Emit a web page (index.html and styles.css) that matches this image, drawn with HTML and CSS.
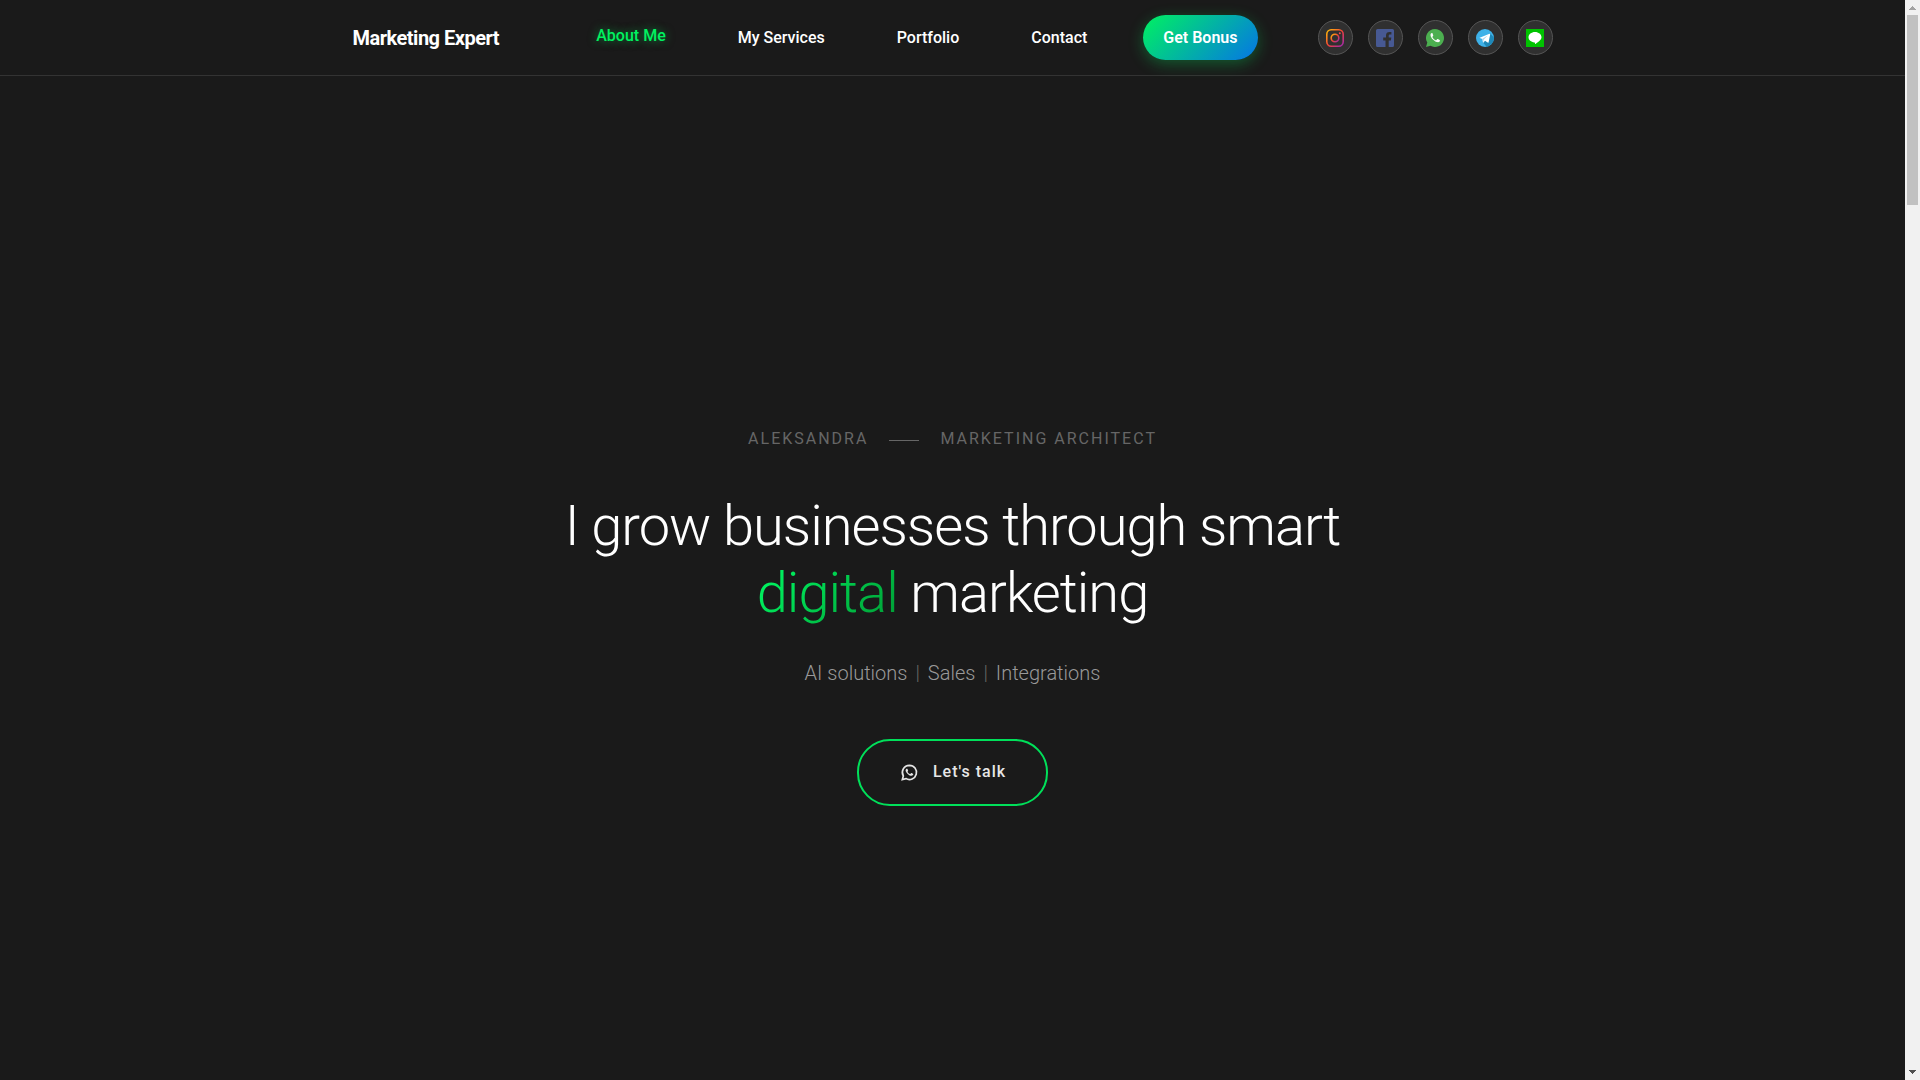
FILE: index.html
```html
<!DOCTYPE html>
<html lang="en">
<head>
  <meta charset="utf-8">
  <meta name="viewport" content="width=device-width, initial-scale=1">
  <title>Marketing Expert</title>
  <link rel="stylesheet" href="styles.css">
</head>
<body>
  <div class="shell">
    <div class="page">
      <header class="header">
        <div class="container">
          <a class="logo" href="#">Marketing Expert</a>
          <nav class="nav" aria-label="Main">
            <a class="nav-link active" href="#about">About Me</a>
            <a class="nav-link" href="#services">My Services</a>
            <a class="nav-link" href="#portfolio">Portfolio</a>
            <a class="nav-link" href="#contact">Contact</a>
            <button class="bonus" type="button">Get Bonus</button>
          </nav>
          <div class="social">
            <a href="#instagram" aria-label="Instagram">
              <svg viewBox="0 0 18 18">
                <defs>
                  <linearGradient id="ig" x1="0" y1="0" x2="1" y2="1">
                    <stop offset="0" stop-color="#ffc107"/>
                    <stop offset=".5" stop-color="#f44336"/>
                    <stop offset="1" stop-color="#9c27b0"/>
                  </linearGradient>
                </defs>
                <g fill="none" stroke="url(#ig)">
                  <rect x=".8" y=".8" width="16.4" height="16.4" rx="4.4" stroke-width="1.6"/>
                  <circle cx="9" cy="9" r="3.8" stroke-width="1.6"/>
                </g>
                <circle cx="13.8" cy="4.2" r="1" fill="#f2475a"/>
              </svg>
            </a>
            <a href="#facebook" aria-label="Facebook">
              <svg viewBox="0 0 18 18">
                <path fill="#475993" d="M1.500 0h15A1.500 1.500 0 0 1 18 1.500v15a1.500 1.500 0 0 1-1.500 1.500h-3.800v-6.600h2.200l.4-2.800h-2.600V6.900c0-.9.400-1.400 1.400-1.400h1.300V3.100c-.6-.1-1.200-.1-1.900-.1-2.200 0-3.500 1.200-3.500 3.400v2.200H7.200v2.800h2.300V18h-8A1.500 1.500 0 0 1 0 16.500v-15A1.500 1.500 0 0 1 1.500 0z"/>
              </svg>
            </a>
            <a href="#whatsapp" aria-label="WhatsApp">
              <svg viewBox="0 0 18 18">
                <path fill="#4caf50" d="M9 0a9 9 0 1 1-4.500 16.800L0 18l1.300-4.400A9 9 0 0 1 9 0z"/>
                <path fill="#fafafa" d="M6.600 4.400c-.2-.4-.4-.5-.8-.5-.5 0-1.300.7-1.300 2 0 1.500 1 3.200 2.700 4.900 1.700 1.700 3.400 2.500 4.900 2.500 1.200 0 1.900-.9 1.900-1.700 0-.4-.1-.5-.4-.7l-1.700-.9c-.4-.2-.6-.1-.8.200l-.7.900c-.2.200-.4.200-.7.100-1.400-.6-2.500-1.700-3.200-3-.1-.2-.1-.4.100-.6l.5-.7c.2-.2.200-.4.100-.6z"/>
              </svg>
            </a>
            <a href="#telegram" aria-label="Telegram">
              <svg viewBox="0 0 18 18">
                <circle cx="9" cy="9" r="9" fill="#3eb1e8"/>
                <path fill="#1e88b8" d="M14 4.300l3.900 4.300a9 9 0 0 1-7.300 9.200L7.200 13.700z"/>
                <path fill="#fff" d="M3.700 8.700l9.800-4c.5-.2.900.1.700.9l-1.600 7.600c-.1.600-.5.700-1 .4L9 11.700l-1.500 1.900c-.3.200-.6 0-.6-.4l-.5-3.300-2.600-.8c-.4-.1-.4-.3-.1-.4z"/>
                <path fill="#b3d9ee" d="M7.200 13.400l-.8-3.600 5.300-3.200-4 4.200z"/>
              </svg>
            </a>
            <a href="#line" aria-label="LINE">
              <svg viewBox="0 0 18 18">
                <path fill="#00c300" d="M0 0h18v18H0z"/>
                <path fill="#fff" d="M9 3c3.600 0 6.500 2.300 6.500 5.200 0 2.800-3.600 4.800-6 6.800-.5.300-.6 0-.5-.5 0-.6 0-1-.6-1.100C5 13 2.500 11 2.500 8.200 2.500 5.300 5.400 3 9 3z"/>
              </svg>
            </a>
          </div>
        </div>
      </header>

      <main class="hero">
        <p class="eyebrow"><span>ALEKSANDRA</span><span class="rule"></span><span>MARKETING ARCHITECT</span></p>
        <h1 class="title">I grow businesses through smart <span class="accent">digital</span> marketing</h1>
        <p class="skills"><span>AI solutions</span><span class="bar">|</span><span>Sales</span><span class="bar">|</span><span>Integrations</span></p>
        <button class="talk" type="button">
          <svg viewBox="0 0 24 24">
            <path fill="none" stroke="#e6e6e6" stroke-width="2" d="M12.500 4a8.500 8.500 0 1 1-4.200 15.900L4 21l1.200-4.200A8.500 8.500 0 0 1 12.500 4z"/>
            <path fill="#e6e6e6" d="M10.200 8.400c-.2-.4-.4-.4-.8-.4-.6 0-1.500.8-1.500 2 0 1.500 1 2.900 2.500 4.300 1.600 1.500 3.200 2.200 4.600 2.200 1.200 0 2.100-.9 2.100-1.800 0-.4-.1-.5-.4-.6l-1.700-.8c-.3-.1-.5-.1-.7.200l-.7.800c-.2.200-.3.200-.6.100-1.200-.5-2.100-1.400-2.700-2.400-.1-.3-.1-.4.100-.6l.5-.7c.1-.2.100-.3 0-.5z"/>
          </svg>
          <span>Let's talk</span>
        </button>
      </main>
    </div>

    <div class="scrollbar" aria-hidden="true">
      <svg class="arrow" viewBox="0 0 7 4"><path fill="#a3a3a3" d="M3 0h1v1h1v1h1v1h1v1H0V3h1V2h1V1h1z"/></svg>
      <div class="thumb"></div>
      <svg class="arrow" viewBox="0 0 7 4"><path fill="#505050" d="M0 0h7v1H6v1H5v1H4v1H3V3H2V2H1V1H0z"/></svg>
    </div>
  </div>
</body>
</html>
```

FILE: styles.css
```css
* {
  box-sizing: border-box;
}

body {
  margin: 0;
  background: #1a1a1a;
  color: #fff;
  font-family: Roboto, "Liberation Sans", sans-serif;
  font-size: 16px;
  line-height: 24px;
}

a {
  color: inherit;
  text-decoration: none;
}

button {
  font: inherit;
  color: inherit;
  cursor: pointer;
}

.shell {
  display: grid;
  grid-template-columns: 1fr 15px;
  height: 100vh;
  overflow: hidden;
}

.page {
  min-width: 0;
  overflow: hidden;
}

/* Header */
.header {
  border-bottom: 1px solid #333;
}

.container {
  display: flex;
  align-items: center;
  max-width: 1200px;
  margin: 0 auto;
  padding: 15px 0;
}

.logo {
  font-size: 20px;
  font-weight: 700;
  letter-spacing: -0.5px;
  white-space: nowrap;
}

.nav {
  display: flex;
  align-items: center;
  gap: 40px;
  margin-left: auto;
}

.nav-link {
  padding: 0 16px;
  font-weight: 500;
  white-space: nowrap;
}

.nav-link.active {
  padding-bottom: 4px;
  color: #00f260;
  text-shadow: 0 0 10px rgba(0, 242, 96, 0.5);
}

.bonus {
  height: 45px;
  padding: 0 20px;
  border: 0;
  border-radius: 25px;
  background: linear-gradient(135deg, #00f260, #0575e6);
  box-shadow: 0 4px 15px rgba(0, 242, 96, 0.3);
  font-weight: 600;
  white-space: nowrap;
}

.social {
  display: flex;
  gap: 15px;
  margin-left: 60px;
}

.social a {
  display: grid;
  place-items: center;
  width: 35px;
  height: 35px;
  border: 1px solid #555;
  border-radius: 50%;
  background: #303030;
}

.social svg {
  width: 18px;
  height: 18px;
}

/* Hero */
.hero {
  display: flex;
  flex-direction: column;
  align-items: center;
  justify-content: center;
  min-height: 100vh;
}

.eyebrow {
  display: flex;
  align-items: center;
  gap: 21px;
  margin: 0 0 42px;
  color: #666;
  letter-spacing: 2px;
}

.rule {
  width: 30px;
  height: 1px;
  margin-top: 4px;
  background: #666;
}

.title {
  max-width: 900px;
  margin: 0 0 31px;
  font-size: 56px;
  font-weight: 300;
  line-height: 67px;
  letter-spacing: -1px;
  text-align: center;
}

.accent {
  background: linear-gradient(135deg, #00ff66, #009933);
  -webkit-background-clip: text;
  background-clip: text;
  color: transparent;
}

.skills {
  display: flex;
  gap: 8px;
  margin: 0 0 51px;
  color: #999;
  font-size: 20px;
  font-weight: 300;
  line-height: 30px;
}

.bar {
  color: #666;
}

.talk {
  display: flex;
  align-items: center;
  gap: 14px;
  height: 67px;
  padding: 0 40px;
  border: 2px solid #00e05a;
  border-radius: 33px;
  background: transparent;
  color: #e6e6e6;
  font-weight: 500;
  letter-spacing: 1px;
}

.talk svg {
  width: 20px;
  height: 20px;
}

/* Scrollbar */
.scrollbar {
  display: flex;
  flex-direction: column;
  align-items: center;
  padding: 6px 0;
  background: #f1f1f1;
}

.arrow {
  width: 7px;
  height: 4px;
}

.thumb {
  width: 11px;
  height: 190px;
  margin: 5px 0 auto;
  background: #c1c1c1;
}
```
